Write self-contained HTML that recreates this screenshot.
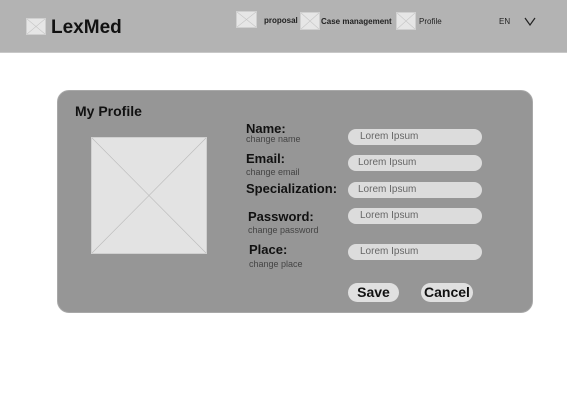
<!DOCTYPE html>
<html><head><style>
*{margin:0;padding:0;box-sizing:border-box}
body{width:567px;height:403px;background:#fff;font-family:"Liberation Sans",Arial,sans-serif;position:relative;overflow:hidden}
.a{position:absolute}
.hdr{left:0;top:0;width:567px;height:53px;background:#b3b3b3;border-bottom:1px solid #c8c8c8}
.ph{position:absolute;background:#e6e6e6;border:1px solid #d0d0d0}
.ph svg{position:absolute;left:0;top:0;width:100%;height:100%}
.nav{font-size:8px;font-weight:bold;color:#222}
.card{left:57px;top:90px;width:476px;height:223px;background:#969696;border-radius:12px;border:1px solid #a8a8a8}
.lbl{font-size:13px;font-weight:bold;color:#111;white-space:nowrap}
.sub{font-size:9px;color:#444;white-space:nowrap}
.in{left:348px;width:134px;height:16px;background:#dcdcdc;border-radius:8px;font-size:10px;color:#666;padding-left:12px;line-height:16px}
.btn{height:19px;background:#e0e0e0;border-radius:10px;font-size:14px;font-weight:bold;color:#111;text-align:center;line-height:19px}
</style></head><body>
<div class="a hdr"></div>
<div class="ph" style="left:26px;top:18px;width:20px;height:17px"><svg viewBox="0 0 20 18" preserveAspectRatio="none"><path d="M0 0L20 18M20 0L0 18" stroke="#c4c4c4" stroke-width=".7"/></svg></div>
<div class="a" style="left:51px;top:17px;font-size:19px;font-weight:bold;color:#111">LexMed</div>
<div class="ph" style="left:236px;top:11px;width:21px;height:17px"><svg viewBox="0 0 20 18" preserveAspectRatio="none"><path d="M0 0L20 18M20 0L0 18" stroke="#c4c4c4" stroke-width=".7"/></svg></div>
<div class="a nav" style="left:264px;top:16px">proposal</div>
<div class="ph" style="left:300px;top:12px;width:20px;height:18px"><svg viewBox="0 0 20 18" preserveAspectRatio="none"><path d="M0 0L20 18M20 0L0 18" stroke="#c4c4c4" stroke-width=".7"/></svg></div>
<div class="a nav" style="left:321px;top:17px">Case management</div>
<div class="ph" style="left:396px;top:12px;width:20px;height:18px"><svg viewBox="0 0 20 18" preserveAspectRatio="none"><path d="M0 0L20 18M20 0L0 18" stroke="#c4c4c4" stroke-width=".7"/></svg></div>
<div class="a nav" style="left:419px;top:17px;font-weight:normal">Profile</div>
<div class="a nav" style="left:499px;top:17px;font-weight:normal">EN</div>
<svg class="a" style="left:524px;top:17px" width="12" height="9"><path d="M1 1L6 8L11 1" stroke="#222" stroke-width="1.2" fill="none"/></svg>

<div class="a card"></div>
<div class="a" style="left:75px;top:103px;font-size:14px;font-weight:bold;color:#111">My Profile</div>
<div class="ph" style="left:91px;top:137px;width:116px;height:117px;background:#e3e3e3"><svg viewBox="0 0 116 117" preserveAspectRatio="none"><path d="M0 0L116 117M116 0L0 117" stroke="#bcbcbc" stroke-width=".7"/></svg></div>

<div class="a lbl" style="left:246px;top:121px">Name:</div>
<div class="a sub" style="left:246px;top:134px">change name</div>
<div class="a lbl" style="left:246px;top:151px">Email:</div>
<div class="a sub" style="left:246px;top:167px">change email</div>
<div class="a lbl" style="left:246px;top:181px">Specialization:</div>
<div class="a lbl" style="left:248px;top:209px">Password:</div>
<div class="a sub" style="left:248px;top:225px">change password</div>
<div class="a lbl" style="left:249px;top:242px">Place:</div>
<div class="a sub" style="left:249px;top:259px">change place</div>

<div class="a in" style="top:129px">Lorem Ipsum</div>
<div class="a in" style="top:155px;padding-left:10px">Lorem Ipsum</div>
<div class="a in" style="top:182px;padding-left:10px">Lorem Ipsum</div>
<div class="a in" style="top:208px">Lorem Ipsum</div>
<div class="a in" style="top:244px">Lorem Ipsum</div>

<div class="a btn" style="left:348px;top:283px;width:51px">Save</div>
<div class="a btn" style="left:421px;top:283px;width:52px">Cancel</div>
</body></html>
